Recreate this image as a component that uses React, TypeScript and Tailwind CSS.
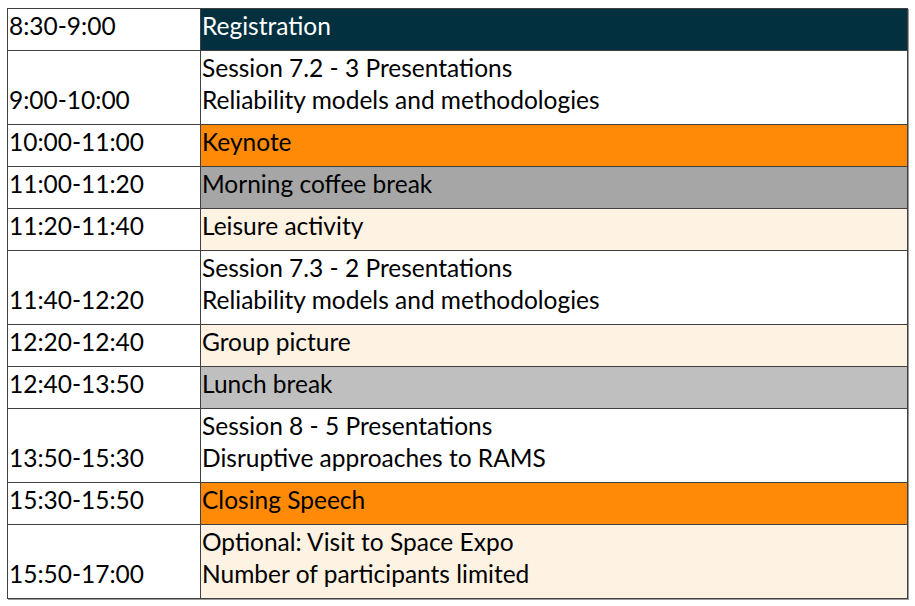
const rows: { time: string; lines: string[]; bg: string }[] = [
  { time: '8:30-9:00', lines: ['Registration'], bg: 'bg-[#03303f] text-white' },
  { time: '9:00-10:00', lines: ['Session 7.2 - 3 Presentations', 'Reliability models and methodologies'], bg: 'bg-white' },
  { time: '10:00-11:00', lines: ['Keynote'], bg: 'bg-[#ff8a08]' },
  { time: '11:00-11:20', lines: ['Morning coffee break'], bg: 'bg-[#a6a6a6]' },
  { time: '11:20-11:40', lines: ['Leisure activity'], bg: 'bg-[#fef2e2]' },
  { time: '11:40-12:20', lines: ['Session 7.3 - 2 Presentations', 'Reliability models and methodologies'], bg: 'bg-white' },
  { time: '12:20-12:40', lines: ['Group picture'], bg: 'bg-[#fef2e2]' },
  { time: '12:40-13:50', lines: ['Lunch break'], bg: 'bg-[#bfbfbf]' },
  { time: '13:50-15:30', lines: ['Session 8 - 5 Presentations', 'Disruptive approaches to RAMS'], bg: 'bg-white' },
  { time: '15:30-15:50', lines: ['Closing Speech'], bg: 'bg-[#ff8a08]' },
  { time: '15:50-17:00', lines: ['Optional: Visit to Space Expo', 'Number of participants limited'], bg: 'bg-[#fef2e2]' },
];

export default function App() {
  return (
    <div className="w-[915px] h-[606px] bg-white pl-[7px] pt-[8px] font-['Lato',sans-serif] text-[24.5px] text-black">
      <table className="w-[901px] border-collapse shadow-[1px_1px_0_#9a9a9a]">
        <tbody>
          {rows.map((r) => (
            <tr key={r.time} className={r.lines.length > 1 ? 'h-[74px]' : 'h-[42px]'}>
              <td className="w-[193px] border border-[#404040] bg-white align-bottom pl-[1px] pb-[8px] leading-[32px]">
                {r.time}
              </td>
              <td className={`border border-[#404040] align-bottom pl-[1px] pb-[8px] leading-[32px] ${r.bg}`}>
                {r.lines.map((l) => (
                  <div key={l}>{l}</div>
                ))}
              </td>
            </tr>
          ))}
        </tbody>
      </table>
    </div>
  );
}
